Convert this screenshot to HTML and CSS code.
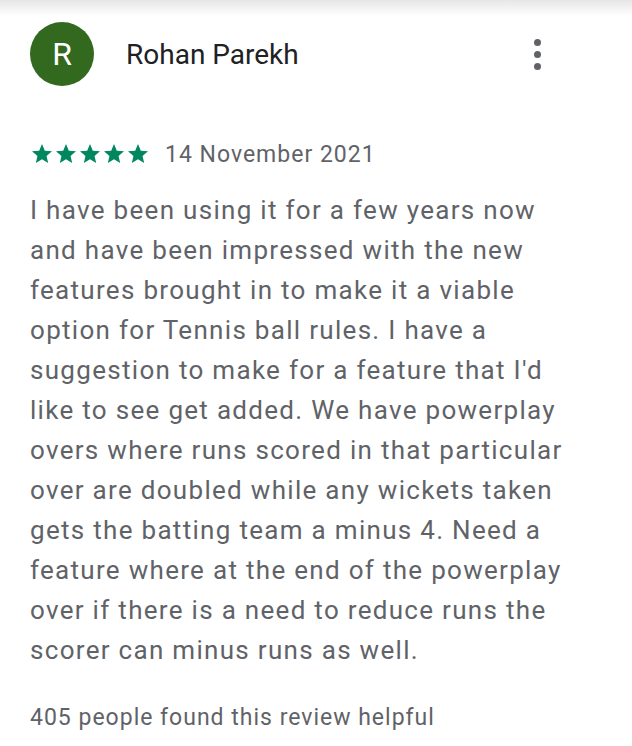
FILE: index.html
```html
<!DOCTYPE html>
<html>
<head>
<meta charset="utf-8">
<link rel="stylesheet" href="styles.css">
</head>
<body>
<div class="topshade"></div>
<div class="review">
  <div class="header">
    <div class="avatar">R</div>
    <div class="name">Rohan Parekh</div>
    <div class="menu"><span></span><span></span><span></span></div>
  </div>
  <div class="meta">
    <div class="stars">
      <svg viewBox="0 0 24 24"><path d="M12 17.27L18.18 21l-1.64-7.03L22 9.24l-7.19-.61L12 2 9.19 8.63 2 9.24l5.46 4.73L5.82 21z"/></svg>
      <svg viewBox="0 0 24 24"><path d="M12 17.27L18.18 21l-1.64-7.03L22 9.24l-7.19-.61L12 2 9.19 8.63 2 9.24l5.46 4.73L5.82 21z"/></svg>
      <svg viewBox="0 0 24 24"><path d="M12 17.27L18.18 21l-1.64-7.03L22 9.24l-7.19-.61L12 2 9.19 8.63 2 9.24l5.46 4.73L5.82 21z"/></svg>
      <svg viewBox="0 0 24 24"><path d="M12 17.27L18.18 21l-1.64-7.03L22 9.24l-7.19-.61L12 2 9.19 8.63 2 9.24l5.46 4.73L5.82 21z"/></svg>
      <svg viewBox="0 0 24 24"><path d="M12 17.27L18.18 21l-1.64-7.03L22 9.24l-7.19-.61L12 2 9.19 8.63 2 9.24l5.46 4.73L5.82 21z"/></svg>
    </div>
    <div class="date">14 November 2021</div>
  </div>
  <p class="text">I have been using it for a few years now<br>and have been impressed with the new<br>features brought in to make it a viable<br>option for Tennis ball rules. I have a<br>suggestion to make for a feature that I'd<br>like to see get added. We have powerplay<br>overs where runs scored in that particular<br>over are doubled while any wickets taken<br>gets the batting team a minus 4. Need a<br>feature where at the end of the powerplay<br>over if there is a need to reduce runs the<br>scorer can minus runs as well.</p>
  <div class="helpful">405 people found this review helpful</div>
</div>
</body>
</html>
```

FILE: styles.css
```css
html, body {
  margin: 0;
  padding: 0;
  background: #ffffff;
  font-family: Roboto, "Noto Sans", sans-serif;
}
.topshade {
  height: 16px;
  background: linear-gradient(#e6e6e6, #ffffff);
}
.review {
  padding: 6px 0 0 30px;
}
.header {
  display: flex;
  align-items: center;
  height: 64px;
}
.avatar {
  width: 64px;
  height: 64px;
  border-radius: 50%;
  background: #33691e;
  color: #ffffff;
  font-size: 32px;
  display: flex;
  align-items: center;
  justify-content: center;
}
.name {
  margin-left: 32px;
  font-size: 28px;
  color: #202124;
  flex: 1;
}
.menu {
  display: flex;
  flex-direction: column;
  gap: 5px;
  margin-right: 91px;
}
.menu span {
  width: 7px;
  height: 7px;
  border-radius: 50%;
  background: #5f6368;
}
.meta {
  display: flex;
  align-items: center;
  margin-top: 54px;
  height: 28px;
}
.stars {
  display: flex;
}
.stars svg {
  width: 24px;
  height: 24px;
  fill: #01875f;
}
.date {
  margin-left: 15px;
  font-size: 23px;
  letter-spacing: 1px;
  color: #5f6368;
}
.text {
  margin: 22px 0 0 0;
  font-size: 26px;
  line-height: 40px;
  letter-spacing: 1.3px;
  color: #5f6368;
}
.helpful {
  margin-top: 34px;
  font-size: 23px;
  letter-spacing: 1px;
  color: #5f6368;
}
```
